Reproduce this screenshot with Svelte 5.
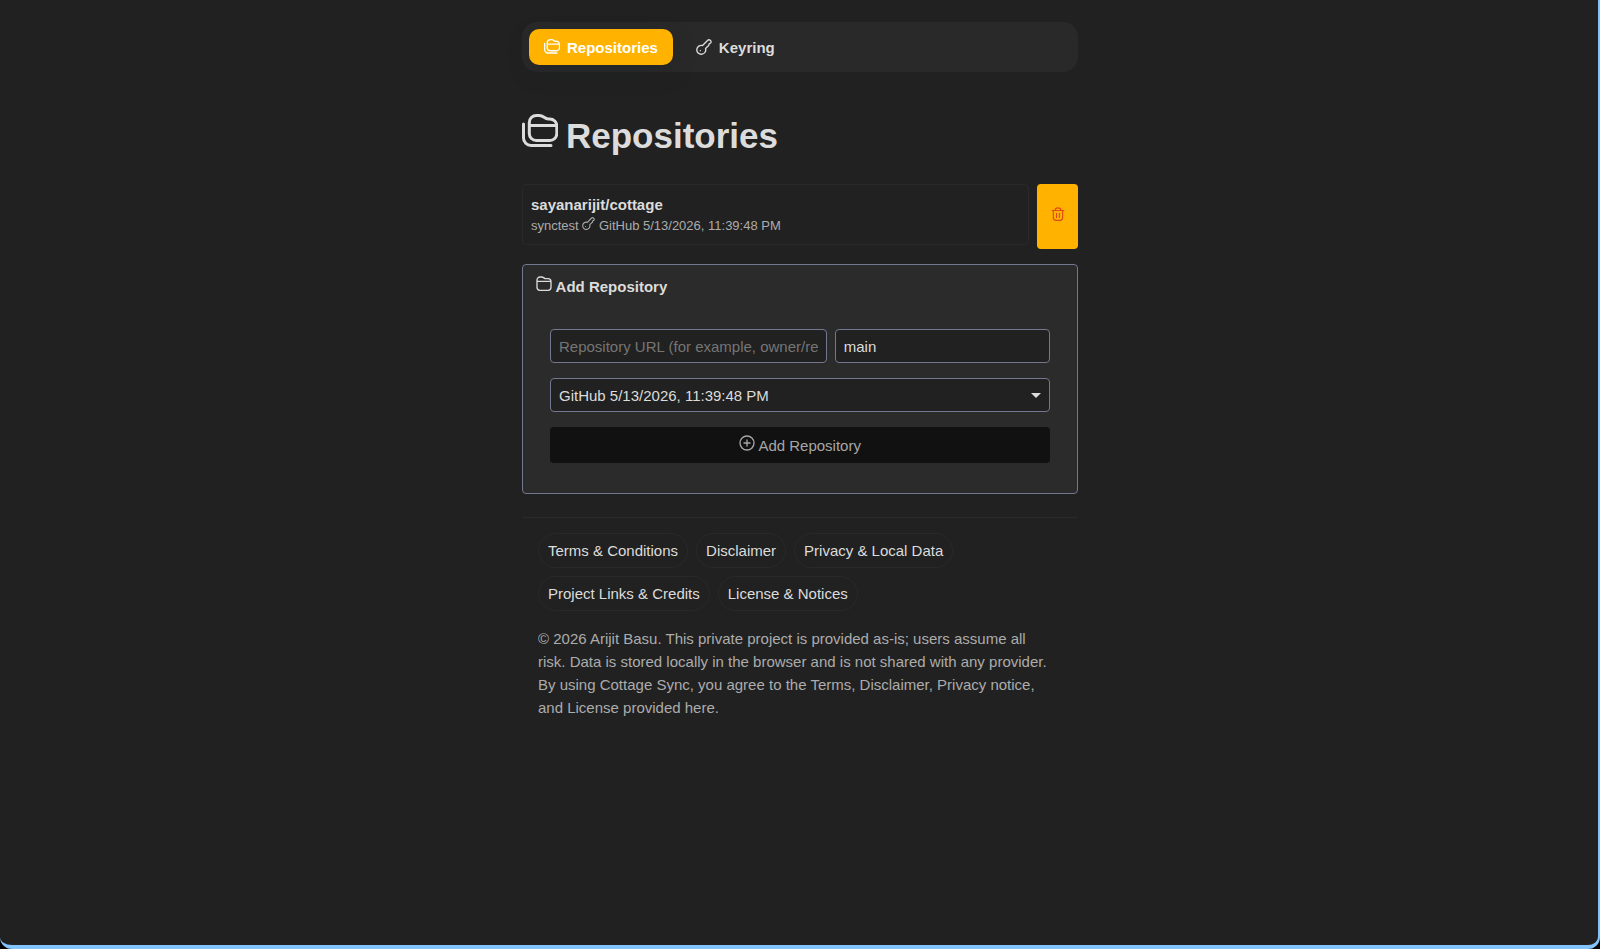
<script>
  let repoUrl = $state('');
  let branch = $state('main');
  const credential = 'GitHub 5/13/2026, 11:39:48 PM';
  const links = [
    'Terms & Conditions',
    'Disclaimer',
    'Privacy & Local Data',
    'Project Links & Credits',
    'License & Notices'
  ];
</script>

{#snippet folders()}
  <svg class="icon" viewBox="0 0 36 36" aria-hidden="true">
    <path d="M7.300 8.500a7 7 0 0 1 7-7h3c4.500 0 5 3.500 9 3.500h1.500a7 7 0 0 1 7 7v7.500a7 7 0 0 1-7 7H14.300a7 7 0 0 1-7-7zM7.300 11.500H34.500M1.500 10v14a7.500 7.500 0 0 0 7.500 7.500H29" />
  </svg>
{/snippet}

{#snippet key()}
  <svg class="icon key" viewBox="0 0 24 24" aria-hidden="true">
    <path d="M9.800 9.800 17.300 2.300a3 3 0 0 1 4.700 3.700l-2.300 1.400-.7 2.400-4.700 4.400a6.700 6.700 0 1 1-4.500-4.400M6.500 17.500h.1" />
  </svg>
{/snippet}

<div class="page">
  <main>
    <nav aria-label="Main">
      <button class="tab active" type="button">{@render folders()}<span>Repositories</span></button>
      <button class="tab" type="button">{@render key()}<span>Keyring</span></button>
    </nav>

    <h1>{@render folders()}<span>Repositories</span></h1>

    <div class="repo">
      <a class="card" href="#cottage">
        <strong>sayanarijit/cottage</strong>
        <small>synctest {@render key()} {credential}</small>
      </a>
      <button class="delete" type="button" aria-label="Delete repository">
        <svg class="icon" viewBox="0 0 24 24" aria-hidden="true">
          <path d="M2 6h20M7 6c0-6 10-6 10 0M4 6v12a5 5 0 0 0 5 5h6a5 5 0 0 0 5-5V6M9.500 11v7M14.500 11v7" />
        </svg>
      </button>
    </div>

    <section class="panel">
      <h2>
        <svg class="icon" viewBox="0 0 24 24" aria-hidden="true">
          <path d="M1.500 6a4.500 4.500 0 0 1 4.500-4.500h2.500c3 0 3.500 2.500 6 2.500H18a4.500 4.500 0 0 1 4.500 4.500V17a4.500 4.500 0 0 1-4.500 4.500H6A4.500 4.500 0 0 1 1.500 17zM1.500 8h21" />
        </svg>
        Add Repository
      </h2>
      <form onsubmit={(e) => e.preventDefault()}>
        <div class="fields">
          <input
            type="text"
            aria-label="Repository URL"
            placeholder="Repository URL (for example, owner/repo)"
            bind:value={repoUrl}
          />
          <input type="text" aria-label="Branch" bind:value={branch} />
        </div>
        <div class="select">
          <select aria-label="Credential"><option>{credential}</option></select>
          <span class="caret"></span>
        </div>
        <button class="submit" type="submit" disabled={!repoUrl}>
          <svg class="icon" viewBox="0 0 24 24" aria-hidden="true">
            <path d="M12 1.500a10.500 10.500 0 1 0 0 21a10.500 10.500 0 1 0 0-21M12 7.500v9M7.500 12h9" />
          </svg>
          Add Repository
        </button>
      </form>
    </section>

    <footer>
      <div class="links">
        {#each links as link}
          <a href="#legal">{link}</a>
        {/each}
      </div>
      <p>
        © 2026 Arijit Basu. This private project is provided as-is; users assume all risk. Data is
        stored locally in the browser and is not shared with any provider. By using Cottage Sync,
        you agree to the Terms, Disclaimer, Privacy notice, and License provided here.
      </p>
    </footer>
  </main>
  <div class="frame"></div>
</div>

<style>
  :global(body) {
    background: #212121;
  }

  .page {
    min-height: 100vh;
    box-sizing: border-box;
    padding: 22px 16px;
    background: #212121;
    color: #dcdcdc;
    font: 15px/23px 'Liberation Sans', Arial, sans-serif;
  }

  .page *,
  .frame {
    box-sizing: border-box;
  }

  .frame {
    position: fixed;
    inset: 0;
    pointer-events: none;
    border: solid #82c4fb;
    border-width: 0 2px 4px 0;
    border-radius: 0 0 12px 12px;
    box-shadow: 0 0 0 12px #000;
  }

  main {
    max-width: 556px;
    margin: 0 auto;
  }

  button,
  input,
  select {
    font: inherit;
    color: inherit;
    margin: 0;
  }

  .icon {
    width: 16px;
    height: 16px;
    fill: none;
    stroke: currentColor;
    stroke-width: 2;
    stroke-linecap: round;
    stroke-linejoin: round;
  }

  nav {
    display: flex;
    gap: 8px;
    padding: 7px;
    background: #292929;
    border-radius: 15px;
  }

  .tab {
    display: flex;
    align-items: center;
    gap: 7px;
    height: 36px;
    padding: 0 15px;
    border: 0;
    border-radius: 10px;
    background: none;
    font-weight: bold;
  }

  .tab .icon {
    stroke-width: 3;
  }

  .tab .key {
    stroke-width: 2;
  }

  .tab.active {
    background: #ffb300;
    color: #fff;
    box-shadow: 0 8px 20px #1e212666;
  }

  h1 {
    display: flex;
    gap: 8px;
    margin: 42px 0 26px;
    font-size: 35px;
    line-height: 44px;
  }

  h1 .icon {
    width: 36px;
    height: 36px;
    stroke-width: 3;
  }

  .repo {
    display: flex;
    align-items: flex-start;
    gap: 8px;
  }

  .card {
    flex: 1;
    padding: 8px;
    border: 1px solid #292929;
    border-radius: 4px;
    color: inherit;
    text-decoration: none;
  }

  .card strong,
  .card small {
    display: block;
  }

  .card small {
    font-size: 13px;
    line-height: 20px;
    color: #acacac;
  }

  .card small .icon {
    width: 13px;
    height: 13px;
  }

  .delete {
    width: 41px;
    height: 65px;
    padding: 0 0 8px;
    border: 0;
    border-radius: 4px;
    background: #ffb300;
    color: #e04a16;
  }

  .delete .icon {
    width: 14px;
    vertical-align: middle;
  }

  .panel {
    margin-top: 15px;
    padding: 9px 27px 30px;
    border: 1px solid #73778f;
    border-radius: 4px;
    background: #2b2b2b;
  }

  h2 {
    margin: 0 -14px 30px;
    font-size: 15px;
    line-height: 25px;
  }

  form,
  .fields {
    display: grid;
    gap: 15px;
  }

  .fields {
    grid-template-columns: 9fr 7fr;
    gap: 8px;
  }

  input,
  select {
    width: 100%;
    min-width: 0;
    height: 34px;
    padding: 0 8px;
    border: 1px solid #73778f;
    border-radius: 4px;
    background: #212121;
    outline: 0;
  }

  input::placeholder {
    color: #757575;
    opacity: 1;
  }

  .select {
    display: grid;
    align-items: center;
  }

  .select > * {
    grid-area: 1 / 1;
  }

  select {
    appearance: none;
  }

  .caret {
    justify-self: end;
    margin-right: 9px;
    border: 5px solid transparent;
    border-top-color: #dcdcdc;
    border-bottom-width: 0;
    pointer-events: none;
  }

  .submit {
    height: 36px;
    padding: 0;
    border: 0;
    border-radius: 4px;
    background: #111;
    color: #a6a6a6;
  }

  footer {
    margin-top: 23px;
    padding: 15px 16px;
    border-top: 1px solid #2a2a2a;
  }

  .links {
    display: flex;
    flex-wrap: wrap;
    gap: 8px;
  }

  .links a {
    padding: 5px 9px;
    border: 1px solid #292929;
    border-radius: 18px;
    color: #dcdcdc;
    text-decoration: none;
  }

  footer p {
    margin: 16px 0 0;
    padding-right: 10px;
    color: #acacac;
  }
</style>
